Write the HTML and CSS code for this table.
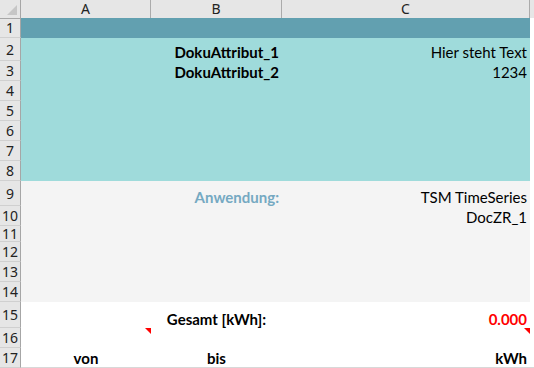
FILE: index.html
```html
<!DOCTYPE html>
<html>
<head>
  <title>Dokumentation</title>
  <link rel="stylesheet" href="styles.css">
</head>
<body>
  <div class="sheet">
    <div class="row head">
      <div class="corner"><span class="corner-mark"></span></div>
      <div class="colhead">A</div>
      <div class="colhead">B</div>
      <div class="colhead">C</div>
      <div class="rest"></div>
    </div>

    <div class="row r20 band-dark">
      <div class="rowhead">1</div><div></div><div></div><div></div><div class="rest"></div>
    </div>
    <div class="row r23 band-teal">
      <div class="rowhead">2</div><div></div>
      <div class="cell right bold">DokuAttribut_1</div>
      <div class="cell right">Hier steht Text</div><div class="rest"></div>
    </div>
    <div class="row r20 band-teal">
      <div class="rowhead">3</div><div></div>
      <div class="cell right bold">DokuAttribut_2</div>
      <div class="cell right">1234</div><div class="rest"></div>
    </div>
    <div class="row r20 band-teal"><div class="rowhead">4</div><div></div><div></div><div></div><div class="rest"></div></div>
    <div class="row r20 band-teal"><div class="rowhead">5</div><div></div><div></div><div></div><div class="rest"></div></div>
    <div class="row r20 band-teal"><div class="rowhead">6</div><div></div><div></div><div></div><div class="rest"></div></div>
    <div class="row r20 band-teal"><div class="rowhead">7</div><div></div><div></div><div></div><div class="rest"></div></div>
    <div class="row r20 band-teal"><div class="rowhead">8</div><div></div><div></div><div></div><div class="rest"></div></div>

    <div class="row r25 band-grey">
      <div class="rowhead">9</div><div></div>
      <div class="cell right bold label-blue">Anwendung:</div>
      <div class="cell right">TSM TimeSeries</div><div class="rest"></div>
    </div>
    <div class="row r20 band-grey">
      <div class="rowhead">10</div><div></div><div></div>
      <div class="cell right">DocZR_1</div><div class="rest"></div>
    </div>
    <div class="row r16 band-grey"><div class="rowhead">11</div><div></div><div></div><div></div><div class="rest"></div></div>
    <div class="row r20 band-grey"><div class="rowhead">12</div><div></div><div></div><div></div><div class="rest"></div></div>
    <div class="row r20 band-grey"><div class="rowhead">13</div><div></div><div></div><div></div><div class="rest"></div></div>
    <div class="row r20 band-grey"><div class="rowhead">14</div><div></div><div></div><div></div><div class="rest"></div></div>

    <div class="row r26">
      <div class="rowhead">15</div><div></div>
      <div class="cell center bold">Gesamt [kWh]:</div>
      <div class="cell right bold red">0.000</div><div class="rest"></div>
    </div>
    <div class="row r20">
      <div class="rowhead">16</div>
      <div class="cell note"></div><div></div>
      <div class="cell note"></div><div class="rest"></div>
    </div>
    <div class="row r20 last">
      <div class="rowhead">17</div>
      <div class="cell center bold">von</div>
      <div class="cell center bold">bis</div>
      <div class="cell right bold">kWh</div><div class="rest"></div>
    </div>
  </div>
</body>
</html>
```

FILE: styles.css
```css
body {
  margin: 0;
  background: #fff;
  font-family: Lato, "Liberation Sans", sans-serif;
  font-size: 15px;
  color: #000;
}
.sheet {
  width: 534px;
  overflow: hidden;
}
.row {
  display: grid;
  grid-template-columns: 21px 130px 131px 248px 1fr;
}
.head { height: 18px; }
.r16 { height: 16px; }
.r20 { height: 20px; }
.r23 { height: 23px; }
.r25 { height: 25px; }
.r26 { height: 26px; }

.band-dark > div { background: #62a0b0; }
.band-teal > div { background: #9fdbdb; }
.band-grey > div { background: #f4f4f4; }
.row > .rest { background: #fff; }

/* column and row headers */
.corner, .colhead, .head .rest {
  background: #e6e6e6;
  border-bottom: 1px solid #a6a6a6;
  box-sizing: border-box;
}
.corner {
  position: relative;
  border-right: 1px solid #a6a6a6;
}
.corner-mark {
  position: absolute;
  right: 3px;
  bottom: 3px;
  width: 0;
  height: 0;
  border-left: 10px solid transparent;
  border-bottom: 10px solid #c6c6c6;
}
.colhead {
  font-family: "Noto Sans", "DejaVu Sans", sans-serif;
  font-size: 14px;
  line-height: 18px;
  text-align: center;
  color: #222;
  border-right: 1px solid #ababab;
}
.row > .rowhead {
  background: #e6e6e6;
  border-right: 1px solid #a6a6a6;
  border-bottom: 1px solid #d0d0d0;
  box-sizing: border-box;
  font-family: "Noto Sans", "DejaVu Sans", sans-serif;
  font-size: 14px;
  line-height: 14px;
  color: #222;
  display: flex;
  align-items: center;
  justify-content: center;
  padding-top: 1px;
}
.r16 > .rowhead { padding-top: 0; }
.last > div { border-bottom: 1px solid #d8d8d8; box-sizing: border-box; }

/* cell content sits at the bottom, Excel style */
.cell {
  display: flex;
  align-items: flex-end;
  padding: 0 3px;
  white-space: nowrap;
  line-height: 18px;
}
.right { justify-content: flex-end; }
.center { justify-content: center; }
.bold { font-weight: bold; }
.red { color: #ff0000; }
.label-blue { color: #75a9c2; }

/* comment indicator */
.note { position: relative; }
.note::after {
  content: "";
  position: absolute;
  top: 0;
  right: 0;
  border-left: 6px solid transparent;
  border-top: 6px solid #ff0000;
}
```
